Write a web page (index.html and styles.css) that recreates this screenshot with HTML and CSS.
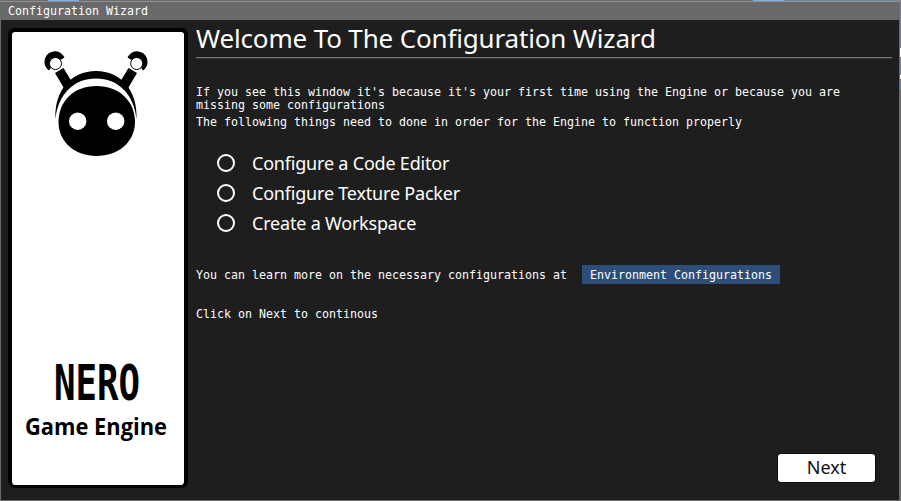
FILE: index.html
```html
<!DOCTYPE html>
<html lang="en">
<head>
<meta charset="utf-8">
<title>Configuration Wizard</title>
<link rel="stylesheet" href="styles.css">
</head>
<body>
<div class="backdrop">
  <section class="window">
    <header class="titlebar">Configuration Wizard</header>
    <div class="body">
      <aside class="brand">
        <svg width="172" height="453" viewBox="12 32 172 453">
          <path d="M55.500 119C54 91 71 71 96 71S138 91 136.500 119C134 94 118 78.500 96 78.500S58 94 55.500 119Z"/>
          <path d="M55 73l8.500-5L72 82l-7 8zM137 73l-8.500-5L120 82l7 8z"/>
          <path d="M49 70.500A10.500 10.500 0 1 1 64.500 57.500L60.500 60A6 6 0 1 0 51 67.500Z"/>
          <path d="M143 70.500A10.500 10.500 0 1 0 127.500 57.500L131.500 60A6 6 0 1 1 141 67.500Z"/>
          <circle class="ring" cx="55.500" cy="63.500" r="6"/>
          <circle class="ring" cx="136.700" cy="63.500" r="6"/>
          <path d="M58.500 122C58.500 101 74 86 96.500 86S135 101 135 122C135 142 118 156 96.500 156S58.500 142 58.500 122Z"/>
          <circle class="eye" cx="77.700" cy="121.200" r="8.700"/>
          <circle class="eye" cx="115.700" cy="121.200" r="8.700"/>
          <text class="nero" transform="translate(54 400) scale(.715 1)">NERO</text>
          <text class="engine" x="25" y="435" textLength="142" lengthAdjust="spacingAndGlyphs">Game Engine</text>
        </svg>
      </aside>
      <main class="content">
        <h1>Welcome To The Configuration Wizard</h1>
        <p class="intro">If you see this window it's because it's your first time using the Engine or because you are<br>missing some configurations</p>
        <p class="need">The following things need to done in order for the Engine to function properly</p>
        <ul class="steps">
          <li><span class="radio"></span><span>Configure a Code Editor</span></li>
          <li><span class="radio"></span><span>Configure Texture Packer</span></li>
          <li><span class="radio"></span><span>Create a Workspace</span></li>
        </ul>
        <div class="learn"><span>You can learn more on the necessary configurations at</span><button class="link">Environment Configurations</button></div>
        <p class="hint">Click on Next to continous</p>
        <button class="next">Next</button>
      </main>
    </div>
  </section>
</div>
</body>
</html>
```
FILE: styles.css
```css
* { box-sizing: border-box; margin: 0; padding: 0; }
body { width: 901px; height: 501px; overflow: hidden; }
.backdrop {
  width: 901px; height: 501px; padding: 1px 1px 0 0;
  background:
    linear-gradient(#fff, #fff) 900px 48px / 1px 9px no-repeat,
    linear-gradient(#fff, #fff) 900px 75px / 1px 4px no-repeat,
    linear-gradient(#7eaeea, #7eaeea) 48px 0 / 31px 1px no-repeat,
    linear-gradient(#7eaeea, #7eaeea) 753px 0 / 31px 1px no-repeat,
    linear-gradient(#72839a, #72839a) 784px 0 / 117px 1px no-repeat,
    linear-gradient(#72839a, #72839a) 900px 0 / 1px 90px no-repeat,
    #6c6c6c;
}
.window {
  display: flex; flex-direction: column;
  width: 900px; height: 500px;
  border: 1px solid #6a6a6a; border-top-color: #929292;
  background: #1e1e1e; color: #fff;
  font: 11.630px/13px "DejaVu Sans Mono", monospace;
}
.titlebar { height: 18px; padding: 3px 7px 0; background: #696969; }
.body { display: flex; flex: 1; padding: 8px 7px 0; gap: 8px; }
.brand { width: 180px; height: 460px; border: 4px solid #000; border-bottom-width: 3px; border-radius: 7px; background: #fff; }
.brand svg { display: block; }
.ring { fill: #fff; stroke: #000; stroke-width: 1; }
.eye { fill: #fff; }
.nero { font: bold 50px "DejaVu Sans Mono", monospace; }
.engine { font: bold 23px "Open Sans", sans-serif; }
.content { display: flex; flex-direction: column; flex: 1; }
h1 {
  height: 30px; border-bottom: 1px solid #747474; box-shadow: 0 1px #353535;
  font: 400 26px/20px "Noto Sans", sans-serif; letter-spacing: -.16px; white-space: nowrap;
}
p { white-space: nowrap; }
.intro { margin-top: 28px; }
.need { margin-top: 4px; }
.steps { list-style: none; margin-top: 20px; padding-left: 21px; }
.steps li { display: flex; align-items: center; height: 30px; font: 18px/28px "Noto Sans", sans-serif; letter-spacing: -.2px; white-space: nowrap; }
.steps li span:last-child { margin-top: -3px; }
.radio { width: 18px; height: 18px; margin: 0 17px 2px 0; border: 2px solid #fff; border-radius: 50%; }
.learn { display: flex; align-items: center; height: 19px; margin-top: 26px; gap: 15px; }
.learn span { padding-top: 2px; }
.link { width: 198px; height: 19px; padding-top: 2px; border: 0; background: #2c4e78; color: #fff; font: inherit; white-space: nowrap; }
.hint { margin-top: 24px; }
.next {
  align-self: flex-end; width: 97px; height: 28px; margin: auto 17px 18px 0; padding-bottom: 3px;
  border: 0; border-radius: 3px; background: #fff; color: #111; box-shadow: 0 0 0 1px #0c0c0c;
  font: 18px/24px "Noto Sans", sans-serif;
}
```
